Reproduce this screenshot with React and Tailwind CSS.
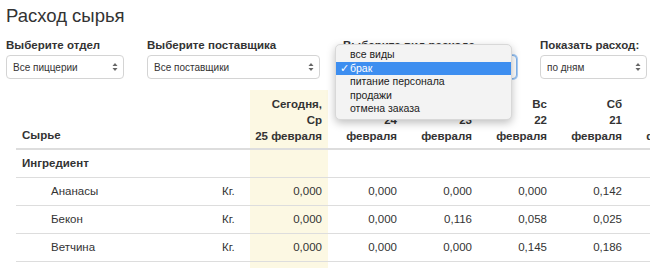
import React from "react";

function Arrows() {
  return (
    <svg width="6" height="10" viewBox="0 0 6 10" className="shrink-0">
      <path d="M3 1 L5.5 4 L0.5 4 Z" fill="#666" />
      <path d="M3 9 L5.5 6 L0.5 6 Z" fill="#666" />
    </svg>
  );
}

function Select({ text, w, focus }) {
  return (
    <div
      className={
        "mt-[1px] h-[24px] rounded-[4px] bg-white flex items-center justify-between pl-[6px] pr-[5px] text-[10px] text-[#333] border " +
        (focus ? "border-[#7fb2ec] shadow-[0_0_0_1px_#a9cdf5]" : "border-[#d4d4d4]")
      }
      style={{ width: w }}
    >
      <span>{text}</span>
      <Arrows />
    </div>
  );
}

function Filter({ label, text, w, focus }) {
  return (
    <div className="flex flex-col">
      <div className="text-[11.5px] font-bold leading-[18px] text-[#333] whitespace-nowrap">{label}</div>
      <Select text={text} w={w} focus={focus} />
    </div>
  );
}

const cols = [
  { lines: ["Сегодня,", "Ср", "25 февраля"], w: "w-[78px]", cream: true },
  { lines: ["Вт", "24", "февраля"], w: "w-[75px]" },
  { lines: ["Пн", "23", "февраля"], w: "w-[75px]" },
  { lines: ["Вс", "22", "февраля"], w: "w-[75px]" },
  { lines: ["Сб", "21", "февраля"], w: "w-[75px]" },
  { lines: ["Пт", "20", "февраля"], w: "w-[75px]" },
];

const rows = [
  { name: "Ананасы", vals: ["0,000", "0,000", "0,000", "0,000", "0,142", "0,000"] },
  { name: "Бекон", vals: ["0,000", "0,000", "0,116", "0,058", "0,025", "0,000"] },
  { name: "Ветчина", vals: ["0,000", "0,000", "0,000", "0,145", "0,186", "0,000"] },
];

export default function App() {
  return (
    <div className="relative w-[650px] h-[268px] overflow-hidden bg-white text-[#333] font-['Liberation_Sans',Arial,sans-serif]">
      <h1 className="px-[6px] pt-[4px] text-[18.5px] leading-[24px] font-normal text-[#333]">Расход сырья</h1>

      <div className="mt-[8px] flex gap-[23px] px-[6px]">
        <Filter label="Выберите отдел" text="Все пиццерии" w="118px" />
        <Filter label="Выберите поставщика" text="Все поставщики" w="173px" />
        <Filter label="Выберите вид расхода" text="брак" w="174px" focus />
        <Filter label="Показать расход:" text="по дням" w="107px" />
      </div>

      <div className="mt-[11px] ml-[16px] w-[800px] text-[11.5px]">
        <div className="flex items-stretch border-b-2 border-[#ddd] h-[60px]">
          <div className="w-[190px] pl-[6px] pb-[5px] font-bold flex items-end leading-[16px]">Сырье</div>
          <div className="w-[44px]" />
          {cols.map((c, i) => (
            <div
              key={i}
              className={
                c.w +
                " pr-[6px] pt-[6px] pb-[4px] text-right font-bold leading-[16px] " +
                (c.cream ? "bg-[#fcf8e3]" : "")
              }
            >
              {c.lines.map((l, j) => (
                <div key={j} className="whitespace-nowrap">{l}</div>
              ))}
            </div>
          ))}
        </div>

        <div className="flex items-stretch border-b border-[#ddd] h-[28px]">
          <div className="w-[190px] pl-[6px] font-bold flex items-center">Ингредиент</div>
          <div className="w-[44px]" />
          {cols.map((c, i) => (
            <div key={i} className={c.w + " " + (c.cream ? "bg-[#fcf8e3]" : "")} />
          ))}
        </div>

        {rows.map((r, ri) => (
          <div key={ri} className="flex items-stretch border-b border-[#ddd] h-[28px]">
            <div className="w-[190px] pl-[35px] flex items-center">{r.name}</div>
            <div className="w-[44px] pl-[16px] flex items-center">Кг.</div>
            {cols.map((c, i) => (
              <div
                key={i}
                className={
                  c.w +
                  " pr-[6px] flex items-center justify-end " +
                  (c.cream ? "bg-[#fcf8e3]" : "")
                }
              >
                {r.vals[i]}
              </div>
            ))}
          </div>
        ))}
        <div className="flex h-[20px]">
          <div className="w-[234px]" />
          <div className="w-[78px] bg-[#fcf8e3]" />
        </div>
      </div>

      <div className="absolute left-[335px] top-[44px] w-[177px] rounded-[5px] bg-[#f3f3f3] border border-[#d8d8d8] shadow-[0_3px_8px_rgba(0,0,0,0.25)] py-[3px] text-[10.5px] text-[#222]">
        {["все виды", "брак", "питание персонала", "продажи", "отмена заказа"].map((t, i) => (
          <div
            key={i}
            className={
              "relative h-[13.5px] leading-[13.5px] pl-[14px] " +
              (i === 1 ? "bg-[#3d8ef0] text-white" : "")
            }
          >
            {i === 1 && <span className="absolute left-[4px] top-0">✓</span>}
            {t}
          </div>
        ))}
      </div>
    </div>
  );
}
